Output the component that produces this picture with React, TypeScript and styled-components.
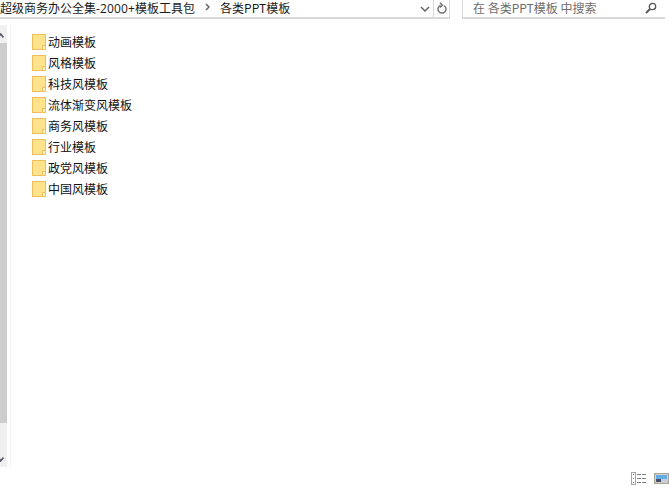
import React from "react"
import styled, { createGlobalStyle } from "styled-components"

const GlobalStyle = createGlobalStyle`
  html, body {
    margin: 0;
    padding: 0;
    background: #fff;
  }
  body {
    font-family: "Noto Sans CJK SC", "Liberation Sans", sans-serif;
    overflow: hidden;
  }
`

const Window = styled.div`
  width: 669px;
  height: 490px;
  display: flex;
  flex-direction: column;
  background: #fff;
  overflow: hidden;
`

const TopBar = styled.div`
  height: 19px;
  flex: none;
  display: flex;
  margin-bottom: 6px;
`

const AddressBox = styled.div`
  width: 450px;
  box-sizing: border-box;
  display: flex;
  align-items: flex-start;
  border-right: 1px solid #d9d9d9;
  border-bottom: 2px solid #d9d9d9;
  color: #1a1a1a;
  font-size: 12px;
  white-space: nowrap;
`

const Crumb = styled.span`
  line-height: 15px;
`

const LatinPart = styled.span`
  font-family: "Open Sans", sans-serif;
  letter-spacing: 0.15px;
`

const Chevron = styled.svg`
  flex: none;
  margin: 3px 10px 0 10px;
`

const AddressTools = styled.div`
  margin-left: auto;
  display: flex;
  align-items: center;
  height: 100%;
`

const ToolCell = styled.div<{ $divided?: boolean }>`
  width: 16px;
  height: 100%;
  box-sizing: border-box;
  display: flex;
  align-items: center;
  justify-content: center;
  border-left: ${(p) => (p.$divided ? "1px solid #d9d9d9" : "none")};
`

const SearchBox = styled.div`
  width: 203px;
  box-sizing: border-box;
  margin-left: 12px;
  padding: 0 8px 0 10px;
  display: flex;
  align-items: flex-start;
  justify-content: space-between;
  border-left: 1px solid #d9d9d9;
  border-bottom: 2px solid #d9d9d9;
  color: #6d6d6d;
  font-size: 12px;
  white-space: pre;
`

const SearchText = styled.span`
  line-height: 15px;
`

const SearchIcon = styled.svg`
  flex: none;
  margin-top: 2px;
`

const Body = styled.div`
  flex: 1;
  min-height: 0;
  display: flex;
`

const ScrollTrack = styled.div`
  width: 7px;
  flex: none;
  display: flex;
  flex-direction: column;
  background: #f0f0f0;
`

const ScrollArrow = styled.div<{ $down?: boolean }>`
  height: 18px;
  flex: none;
  display: flex;
  align-items: ${(p) => (p.$down ? "flex-end" : "flex-start")};
  padding: ${(p) => (p.$down ? "0 0 5px" : "8px 0 0")};
  box-sizing: border-box;
`

const ScrollThumb = styled.div`
  height: 380px;
  flex: none;
  background: #cdcdcd;
`

const Spacer = styled.div`
  flex: 1;
`

const FileList = styled.div`
  flex: 1;
  min-width: 0;
  margin-left: 3px;
  padding: 6px 0 0 21px;
  border-left: 1px solid #f2f2f2;
  box-sizing: border-box;
  display: flex;
  flex-direction: column;
`

const FileRow = styled.div`
  height: 21px;
  display: flex;
  align-items: center;
  gap: 2px;
  color: #111;
  font-size: 12px;
  white-space: nowrap;
`

const StatusBar = styled.div`
  height: 23px;
  flex: none;
  display: flex;
  justify-content: flex-end;
  align-items: flex-start;
  gap: 7px;
  padding-top: 5px;
  box-sizing: border-box;
`

const PreviewIconSvg = styled.svg`
  margin-top: 1px;
`

const folders = [
  "动画模板",
  "风格模板",
  "科技风模板",
  "流体渐变风模板",
  "商务风模板",
  "行业模板",
  "政党风模板",
  "中国风模板",
]

function FolderIcon() {
  return (
    <svg width="14" height="16" viewBox="0 0 14 16">
      <rect x="0.5" y="0.5" width="13" height="15" fill="#fee28c" stroke="#f0bf5c" />
      <path d="M10.5 15.5V11.5H13.5V15.5Z" fill="#fff3c4" stroke="#f0bf5c" />
    </svg>
  )
}

function DetailsIcon() {
  return (
    <svg width="16" height="13" viewBox="0 0 16 13">
      <rect x="0.5" y="0.5" width="4" height="12" fill="#fff" stroke="#a9a594" />
      <rect x="2" y="2" width="1" height="1" fill="#666" />
      <rect x="2" y="6" width="1" height="1" fill="#4d9be0" />
      <rect x="2" y="10" width="1" height="1" fill="#b85a3c" />
      <path d="M6 2.5H10M11 2.5H15M6 6.5H10M11 6.5H15M6 10.5H10M11 10.5H15" stroke="#7c7c7c" />
    </svg>
  )
}

function PreviewIcon() {
  return (
    <PreviewIconSvg width="15" height="11" viewBox="0 0 15 11">
      <rect x="0.75" y="0.75" width="13.5" height="9.5" fill="#fff" stroke="#a9a594" strokeWidth="1.5" />
      <rect x="2" y="2" width="11" height="4" fill="#63ade6" />
      <rect x="2" y="6" width="11" height="3" fill="#c3cfdd" />
      <rect x="2" y="6" width="5" height="3" fill="#4a4d68" />
    </PreviewIconSvg>
  )
}

export default function App() {
  return (
    <Window>
      <GlobalStyle />
      <TopBar>
        <AddressBox>
          <Crumb>
            超级商务办公全集<LatinPart>-2000+</LatinPart>模板工具包
          </Crumb>
          <Chevron width="5" height="8" viewBox="0 0 5 8">
            <path d="M1 1L4 4L1 7" fill="none" stroke="#666" strokeWidth="1.5" />
          </Chevron>
          <Crumb>各类PPT模板</Crumb>
          <AddressTools>
            <ToolCell>
              <svg width="10" height="6" viewBox="0 0 10 6">
                <path d="M1 1L5 5L9 1" fill="none" stroke="#666" strokeWidth="1.5" />
              </svg>
            </ToolCell>
            <ToolCell $divided>
              <svg width="10" height="13" viewBox="0 0 10 13">
                <path
                  d="M7 3.6A4 4 0 1 1 3.4 3.4M3 0.8L5.4 3.2L3 5.4"
                  fill="none"
                  stroke="#707070"
                  strokeWidth="1.4"
                />
              </svg>
            </ToolCell>
          </AddressTools>
        </AddressBox>
        <SearchBox>
          <SearchText>在 各类PPT模板 中搜索</SearchText>
          <SearchIcon width="12" height="12" viewBox="0 0 12 12">
            <circle cx="7.5" cy="4.5" r="3.2" fill="none" stroke="#555" strokeWidth="1.3" />
            <path d="M5 7L1 11" stroke="#555" strokeWidth="1.8" />
          </SearchIcon>
        </SearchBox>
      </TopBar>
      <Body>
        <ScrollTrack>
          <ScrollArrow>
            <svg width="4" height="5" viewBox="0 0 4 5">
              <path d="M-1 3.6L0.6 1L3.4 4.4" fill="none" stroke="#5a5a6a" strokeWidth="1.6" />
            </svg>
          </ScrollArrow>
          <ScrollThumb />
          <Spacer />
          <ScrollArrow $down>
            <svg width="4" height="5" viewBox="0 0 4 5">
              <path d="M-1 1L0.6 4L3.4 0.6" fill="none" stroke="#5a5a6a" strokeWidth="1.6" />
            </svg>
          </ScrollArrow>
        </ScrollTrack>
        <FileList>
          {folders.map((name) => (
            <FileRow key={name}>
              <FolderIcon />
              {name}
            </FileRow>
          ))}
        </FileList>
      </Body>
      <StatusBar>
        <DetailsIcon />
        <PreviewIcon />
      </StatusBar>
    </Window>
  )
}
